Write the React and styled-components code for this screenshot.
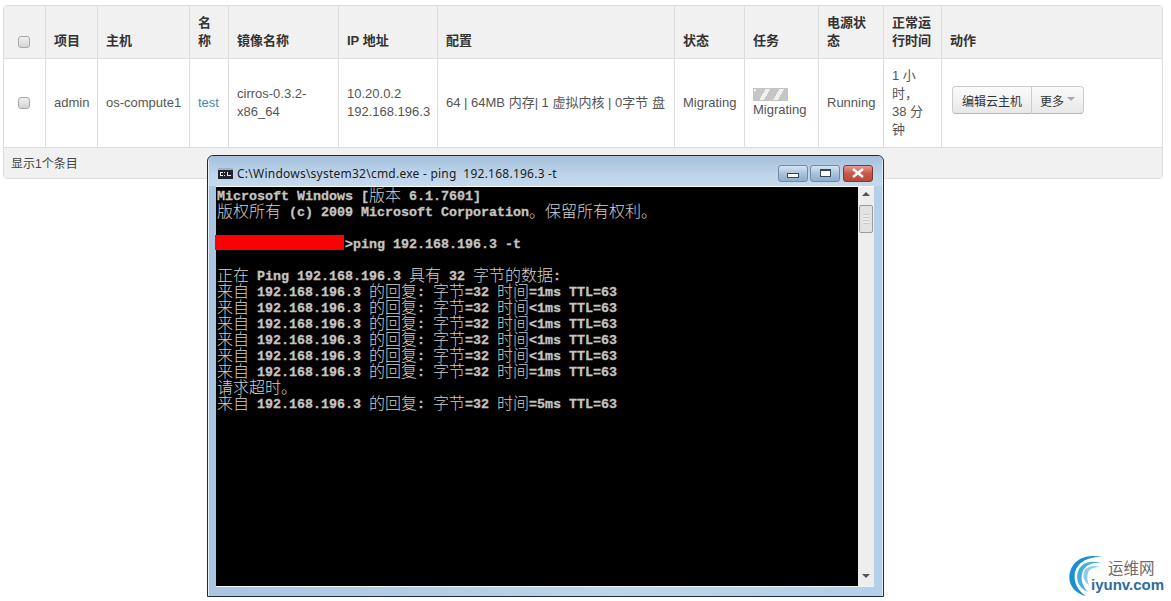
import styled, { createGlobalStyle } from "styled-components";

const sansStack = `"Liberation Sans", "Noto Sans CJK SC", sans-serif`;

const GlobalStyle = createGlobalStyle`
  html, body {
    margin: 0;
    background: #ffffff;
  }
  body {
    font-family: ${sansStack};
    font-size: 13px;
    line-height: 18px;
    color: #555555;
  }
`;

const columns = [41, 52, 92, 39, 110, 99, 237, 70, 74, 65, 58, 221];

const consoleLines = [
  { ms: "=1ms" },
  { ms: "<1ms" },
  { ms: "<1ms" },
  { ms: "<1ms" },
  { ms: "<1ms" },
  { ms: "=1ms" },
  { timeout: true },
  { ms: "=5ms" },
];

const WindowIcon = () => (
  <svg width="15" height="11" viewBox="0 0 15 11">
    <rect width="15" height="11" fill="#20242c" />
    <rect y="0" width="15" height="2" fill="#9fb0c8" />
    <path d="M2 4h3v1H3v2h2v1H2zM6 7h1v1H6zM6 4h1v1H6zM9 4h1v3h3v1H9z" fill="#e8e8e8" />
  </svg>
);

const Logo = () => (
  <svg width="46" height="48" viewBox="0 0 46 48">
    <path d="M22 44 C6 40 2 26 8 15 C13 6 24 2 38 5 C26 4 14 9 11 20 C9 30 14 39 22 44Z" fill="#1b8fd2" />
    <path d="M24 40 C13 35 11 25 15 17 C19 10 28 8 38 11 C29 10 21 13 18.5 20 C16 28 19 35 24 40Z" fill="#45ade0" />
    <path d="M25 33 C19 29 18 23 21 18 C24 14 30 13 36 15 C30 15 25 17 24 21 C23 25 23 29 25 33Z" fill="#8ccdec" />
  </svg>
);

export default function App() {
  return (
    <>
      <GlobalStyle />
      <Page>
        <TableCard>
          <Table>
            <colgroup>
              {columns.map((w, i) => (
                <col key={i} style={{ width: w }} />
              ))}
            </colgroup>
            <thead>
              <tr>
                <Th><HeadCheck type="checkbox" /></Th>
                <Th>项目</Th>
                <Th>主机</Th>
                <Th>名称</Th>
                <Th>镜像名称</Th>
                <Th>IP 地址</Th>
                <Th>配置</Th>
                <Th>状态</Th>
                <Th>任务</Th>
                <Th>电源状态</Th>
                <Th>正常运行时间</Th>
                <Th>动作</Th>
              </tr>
            </thead>
            <tbody>
              <tr>
                <Td><Check type="checkbox" /></Td>
                <Td>admin</Td>
                <NoWrapCell>os-compute1</NoWrapCell>
                <Td><NameLink href="#">test</NameLink></Td>
                <Td>cirros-0.3.2-<br />x86_64</Td>
                <Td>10.20.0.2<br />192.168.196.3</Td>
                <NoWrapCell>64 | 64MB 内存| 1 虚拟内核 | 0字节 盘</NoWrapCell>
                <Td>Migrating</Td>
                <Td>
                  <ProgressBar />
                  Migrating
                </Td>
                <Td>Running</Td>
                <Td>1 小<br />时，<br />38 分<br />钟</Td>
                <ActionCell>
                  <ButtonGroup>
                    <GroupButton>编辑云主机</GroupButton>
                    <GroupButton>更多<Caret /></GroupButton>
                  </ButtonGroup>
                </ActionCell>
              </tr>
            </tbody>
            <tfoot>
              <tr>
                <FooterCell colSpan={12}>显示1个条目</FooterCell>
              </tr>
            </tfoot>
          </Table>
        </TableCard>

        <CmdWindow>
          <TitleBar>
            <WindowIcon />
            <TitleText>{"C:\\Windows\\system32\\cmd.exe - ping  192.168.196.3 -t"}</TitleText>
            <WinButton>
              <MinGlyph />
            </WinButton>
            <WinButton>
              <MaxGlyph />
            </WinButton>
            <CloseButton>
              <svg width="12" height="10" viewBox="0 0 12 10">
                <path d="M1 1 L11 9 M11 1 L1 9" stroke="#ffffff" strokeWidth="2.4" />
              </svg>
            </CloseButton>
          </TitleBar>
          <ClientArea>
            <Console>
              <Line>Microsoft Windows [<Cjk>版本</Cjk> 6.1.7601]</Line>
              <Line><Cjk>版权所有</Cjk> (c) 2009 Microsoft Corporation<Cjk>。保留所有权利。</Cjk></Line>
              <Line />
              <Line><Redacted />&gt;ping 192.168.196.3 -t</Line>
              <Line />
              <Line><Cjk>正在</Cjk> Ping 192.168.196.3 <Cjk>具有</Cjk> 32 <Cjk>字节的数据</Cjk>:</Line>
              {consoleLines.map((line, i) =>
                line.timeout ? (
                  <Line key={i}><Cjk>请求超时。</Cjk></Line>
                ) : (
                  <Line key={i}>
                    <Cjk>来自</Cjk> 192.168.196.3 <Cjk>的回复</Cjk>: <Cjk>字节</Cjk>=32 <Cjk>时间</Cjk>{line.ms} TTL=63
                  </Line>
                )
              )}
            </Console>
            <ScrollBar>
              <ArrowUp />
              <Thumb />
              <ArrowDown />
            </ScrollBar>
          </ClientArea>
        </CmdWindow>

        <Watermark>
          <Logo />
          <WatermarkName>运维网</WatermarkName>
          <WatermarkDomain>iyunv.com</WatermarkDomain>
        </Watermark>
      </Page>
    </>
  );
}

const Page = styled.div`
  position: relative;
  width: 1171px;
  height: 601px;
  overflow: hidden;
  box-sizing: border-box;
  padding: 5px 8px 0 3px;
`;

const TableCard = styled.div`
  border: 1px solid #dddddd;
  border-radius: 4px;
  overflow: hidden;
`;

const Table = styled.table`
  width: 1158px;
  table-layout: fixed;
  border-collapse: separate;
  border-spacing: 0;
`;

const Th = styled.th`
  height: 53px;
  box-sizing: border-box;
  padding: 6px 8px 8px;
  background: #f1f1f1;
  border-left: 1px solid #dddddd;
  border-bottom: 1px solid #dddddd;
  color: #333333;
  font-weight: bold;
  text-align: left;
  vertical-align: bottom;
  &:first-child {
    border-left: 0;
  }
`;

const Td = styled.td`
  height: 88px;
  box-sizing: border-box;
  padding: 5px 8px;
  border-left: 1px solid #dddddd;
  vertical-align: middle;
  &:first-child {
    border-left: 0;
  }
`;

const NoWrapCell = styled(Td)`
  white-space: nowrap;
`;

const ActionCell = styled(Td)`
  padding-left: 10px;
`;

const FooterCell = styled.td`
  height: 31px;
  box-sizing: border-box;
  padding: 2px 7px 0;
  background: #f1f1f1;
  border-top: 1px solid #dddddd;
  font-size: 12px;
  color: #444444;
`;

const Check = styled.input`
  appearance: none;
  display: block;
  width: 12px;
  height: 12px;
  margin: 0 0 0 6px;
  border: 1px solid #a9a9a9;
  border-radius: 3px;
  background: linear-gradient(#f0f0f0, #d4d4d4);
`;

const HeadCheck = styled(Check)`
  margin-bottom: 2px;
`;

const NameLink = styled.a`
  color: #3f8eab;
  text-decoration: none;
`;

const ProgressBar = styled.div`
  width: 35px;
  height: 13px;
  background: repeating-linear-gradient(
    -60deg,
    #c6c6c6 0 8px,
    #f0f0f0 8px 12px
  );
  border: 1px solid #c4c4c4;
  box-sizing: border-box;
`;

const ButtonGroup = styled.div`
  display: flex;
  width: fit-content;
  height: 28px;
  margin-bottom: 6px;
`;

const GroupButton = styled.button`
  display: flex;
  align-items: center;
  box-sizing: border-box;
  height: 28px;
  padding: 0 9px;
  border: 1px solid #cccccc;
  border-bottom-color: #b3b3b3;
  background: linear-gradient(#fbfbfb, #e8e8e8);
  color: #333333;
  font: 12px ${sansStack};
  &:first-child {
    border-radius: 4px 0 0 4px;
    border-right: 0;
  }
  &:last-child {
    padding: 0 8px;
    border-radius: 0 4px 4px 0;
  }
`;

const Caret = styled.span`
  width: 0;
  height: 0;
  margin: 0 0 3px 3px;
  border: 4px solid transparent;
  border-top-color: #aaaaaa;
  border-bottom: 0;
`;

const CmdWindow = styled.div`
  position: absolute;
  left: 207px;
  top: 155px;
  width: 677px;
  height: 442px;
  box-sizing: border-box;
  display: flex;
  flex-direction: column;
  border: 1px solid #1c2b3a;
  border-radius: 6px 6px 0 0;
  background: linear-gradient(90deg, #a9c5e2, #bcd5ec 60%, #b3cfe9);
  box-shadow: inset 1px 0 0 #e6eef7, inset -1px 0 0 #e6eef7;
  padding: 0 9px 9px 8px;
`;

const TitleBar = styled.div`
  flex: none;
  height: 30px;
  box-sizing: border-box;
  display: flex;
  align-items: center;
  padding: 4px 9px 0 9px;
  margin: 0 -8px 0 -7px;
  background: linear-gradient(#a5bfdb, #bdd4ea 60%, #c5d9ed);
  border-radius: 5px 5px 0 0;
`;

const TitleText = styled.span`
  flex: 1;
  margin-left: 4px;
  font: 12px "Noto Sans", sans-serif;
  letter-spacing: 0.02em;
  color: #1c1c1c;
  white-space: pre;
`;

const WinButton = styled.div`
  width: 30px;
  height: 17px;
  margin-left: 2px;
  box-sizing: border-box;
  display: flex;
  align-items: center;
  justify-content: center;
  border: 1px solid #6d8aa8;
  border-radius: 3px;
  background: linear-gradient(#d7e5f2, #a9c3dd 50%, #8eaccb);
`;

const CloseButton = styled(WinButton)`
  margin-left: 3px;
  background: linear-gradient(#e59a8e, #c9584a 50%, #b8483c);
  border-color: #7c3a36;
`;

const MinGlyph = styled.span`
  width: 10px;
  height: 3px;
  margin-top: 5px;
  border: 1px solid #33465a;
  background: #ffffff;
`;

const MaxGlyph = styled.span`
  width: 9px;
  height: 5px;
  border: 1px solid #33465a;
  border-top-width: 2px;
  background: #ffffff;
`;

const ClientArea = styled.div`
  flex: 1;
  display: flex;
  min-height: 0;
  border-top: 1px solid #ffffff;
  border-bottom: 1px solid #f2f6fa;
`;

const Console = styled.div`
  flex: 1;
  background: #000000;
  padding: 2px 0 0 1px;
  color: #c4c4c4;
  font: bold 13.33px "Liberation Mono", "DejaVu Sans Mono", monospace;
  -webkit-text-stroke: 0.3px #c4c4c4;
`;

const Line = styled.div`
  height: 16px;
  line-height: 16px;
  white-space: pre;
`;

const Cjk = styled.span`
  font: 300 16px "Noto Sans CJK SC", sans-serif;
  line-height: 0;
  vertical-align: -1px;
  color: #d0d0d0;
  -webkit-text-stroke: 0;
`;

const Redacted = styled.span`
  display: inline-block;
  width: 129px;
  height: 15px;
  margin: -2px 1px 0 -2px;
  vertical-align: top;
  background: #fb0000;
`;

const ScrollBar = styled.div`
  flex: none;
  width: 16px;
  box-sizing: border-box;
  display: flex;
  flex-direction: column;
  align-items: center;
  padding: 5px 0 8px;
  background: #eeeeee;
`;

const ArrowUp = styled.span`
  width: 0;
  height: 0;
  margin-bottom: 9px;
  border: 4px solid transparent;
  border-top: 0;
  border-bottom-color: #555555;
`;

const Thumb = styled.div`
  width: 14px;
  height: 28px;
  box-sizing: border-box;
  border: 1px solid #9a9a9a;
  border-radius: 2px;
  background: repeating-linear-gradient(#c9c9c9 0 1px, #ececec 1px 3px);
  background-size: 6px 10px;
  background-position: center;
  background-repeat: no-repeat;
  background-color: #e2e2e2;
`;

const ArrowDown = styled(ArrowUp)`
  margin: auto 0 0;
  border-top: 4px solid #555555;
  border-bottom: 0;
`;

const Watermark = styled.div`
  position: absolute;
  left: 1064px;
  top: 552px;
  width: 107px;
  height: 49px;
`;

const WatermarkName = styled.span`
  position: absolute;
  left: 44px;
  top: 5px;
  font: 15.5px "Noto Sans CJK SC", sans-serif;
  line-height: 20px;
  color: #6a6a6a;
`;

const WatermarkDomain = styled.span`
  position: absolute;
  left: 27px;
  top: 24px;
  font: bold 15px "Liberation Sans", sans-serif;
  line-height: 18px;
  color: #2c6d9e;
`;
